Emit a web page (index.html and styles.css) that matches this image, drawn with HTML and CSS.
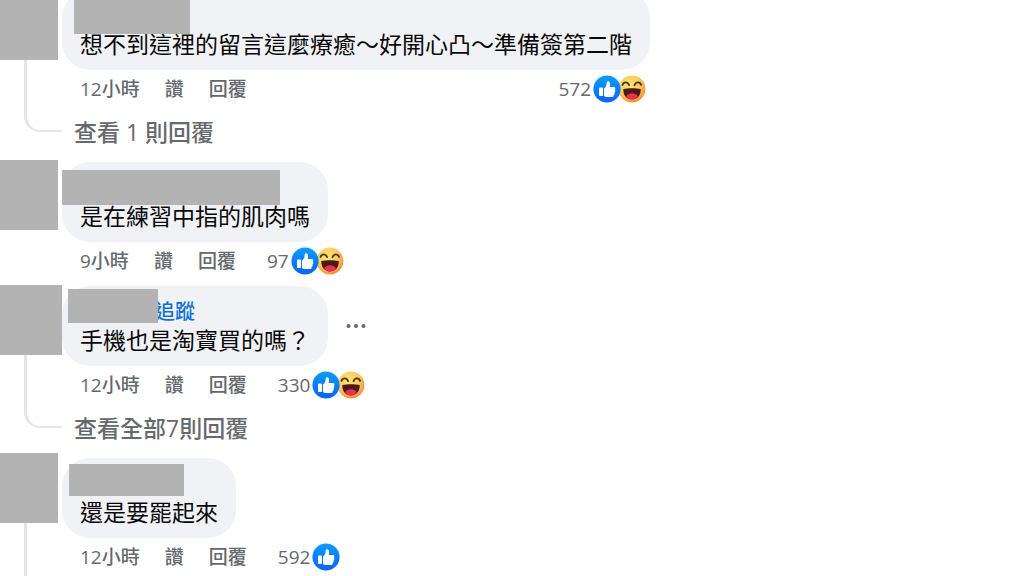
FILE: index.html
```html
<!DOCTYPE html>
<html lang="zh-Hant">

<head>
    <meta charset="UTF-8">
    <meta name="viewport" content="width=device-width, initial-scale=1.0">
    <title>留言</title>
    <link rel="stylesheet" href="styles.css">
</head>

<body>
    <!-- 共用圖示 -->
    <svg class="sprite" aria-hidden="true">
        <defs>
            <linearGradient id="blue" x1="0" y1="0" x2="0" y2="1">
                <stop offset="0" stop-color="#0a9cff" />
                <stop offset="1" stop-color="#0a62f5" />
            </linearGradient>
            <radialGradient id="yellow" cx="0.4" cy="0.35" r="0.68">
                <stop offset="0" stop-color="#ffe478" />
                <stop offset="0.6" stop-color="#fccb5c" />
                <stop offset="1" stop-color="#f38a3c" />
            </radialGradient>
        </defs>
        <symbol id="like" viewBox="0 0 28 28">
            <circle cx="14" cy="14" r="13.6" fill="url(#blue)" />
            <rect x="6" y="12.5" width="4" height="8.5" rx="1" fill="#fff" />
            <path fill="#fff" d="M11 13.6c1.9-1.3 2.6-3 2.6-5.4 0-1.4.5-2 1.4-2 1.6 0 2.2 1.6 2.1 3.2 0 1-.3 1.9-.5 2.6h3.8c1.3 0 2 .7 2 1.7 0 .7-.3 1.1-.7 1.4.4.3.6.7.6 1.2 0 .8-.4 1.3-1 1.5.2.3.3.6.3 1 0 .7-.4 1.2-1.1 1.4.1.2.1.4.1.6 0 .8-.7 1.3-1.8 1.3h-3.6c-1.8 0-3-.4-4.2-1.2z" />
        </symbol>
        <symbol id="haha" viewBox="0 0 28 28">
            <circle cx="14" cy="14" r="13.4" fill="url(#yellow)" />
            <path d="M4.5 10c1.2-3.6 5.400-3.600 6.600.2M16.500 10.200c1.300-3.800 5.400-3.700 6.600-.2" fill="none" stroke="#4a3716" stroke-width="1.8" stroke-linecap="round" />
            <path d="M5.300 14c2.500-.6 5.500-.8 8.700-.8s6.200.2 8.700.8c.4 5.900-3.300 10.400-8.700 10.400s-9.100-4.500-8.700-10.400z" fill="#4b1a16" />
            <path d="M8.100 21.200c1.500-2.200 3.600-3 5.900-3s4.400.8 5.900 3c-1.500 2-3.500 3.100-5.900 3.100s-4.400-1.100-5.900-3.100z" fill="#ee2f52" />
        </symbol>
    </svg>

    <main class="comments">
        <article class="comment has_replies">
            <div class="avatar"></div>
            <div class="comment_con">
                <div class="bubble_row">
                    <div class="bubble">
                        <div class="name"></div>
                        <p>想不到這裡的留言這麼療癒～好開心凸～準備簽第二階</p>
                        <span class="mask mask_a"></span>
                    </div>
                </div>
                <div class="meta">
                    <a href="#">12小時</a>
                    <button type="button">讚</button>
                    <button type="button">回覆</button>
                    <div class="reactions">
                        <span>572</span>
                        <svg class="like"><use href="#like" /></svg>
                        <svg class="haha"><use href="#haha" /></svg>
                    </div>
                </div>
                <button type="button" class="more_replies">查看 1 則回覆</button>
            </div>
        </article>

        <article class="comment">
            <div class="avatar avatar_b"></div>
            <div class="comment_con">
                <div class="bubble_row">
                    <div class="bubble">
                        <div class="name"></div>
                        <p>是在練習中指的肌肉嗎</p>
                        <span class="mask mask_b"></span>
                    </div>
                </div>
                <div class="meta">
                    <a href="#">9小時</a>
                    <button type="button">讚</button>
                    <button type="button">回覆</button>
                    <div class="reactions">
                        <span>97</span>
                        <svg class="like"><use href="#like" /></svg>
                        <svg class="haha"><use href="#haha" /></svg>
                    </div>
                </div>
            </div>
        </article>

        <article class="comment has_replies">
            <div class="avatar avatar_c"></div>
            <div class="comment_con">
                <div class="bubble_row">
                    <div class="bubble">
                        <div class="name"><a href="#" class="follow">追蹤</a></div>
                        <p>手機也是淘寶買的嗎？</p>
                        <span class="mask mask_c"></span>
                    </div>
                    <button type="button" class="menu" aria-label="更多">
                        <svg viewBox="0 0 20 6">
                            <circle cx="2.5" cy="3" r="2" />
                            <circle cx="10" cy="3" r="2" />
                            <circle cx="17.5" cy="3" r="2" />
                        </svg>
                    </button>
                </div>
                <div class="meta">
                    <a href="#">12小時</a>
                    <button type="button">讚</button>
                    <button type="button">回覆</button>
                    <div class="reactions">
                        <span>330</span>
                        <svg class="like"><use href="#like" /></svg>
                        <svg class="haha"><use href="#haha" /></svg>
                    </div>
                </div>
                <button type="button" class="more_replies">查看全部7則回覆</button>
            </div>
        </article>

        <article class="comment thread_open">
            <div class="avatar avatar_d"></div>
            <div class="comment_con">
                <div class="bubble_row">
                    <div class="bubble">
                        <div class="name"></div>
                        <p>還是要罷起來</p>
                        <span class="mask mask_d"></span>
                    </div>
                </div>
                <div class="meta">
                    <a href="#">12小時</a>
                    <button type="button">讚</button>
                    <button type="button">回覆</button>
                    <div class="reactions">
                        <span>592</span>
                        <svg class="like"><use href="#like" /></svg>
                    </div>
                </div>
            </div>
        </article>
    </main>
</body>

</html>
```

FILE: styles.css
```css
*,
*::before {
    padding: 0;
    margin: 0;
    box-sizing: border-box;
}

body {
    background: #fff;
    color: #080809;
    font-family: "Open Sans", "Noto Sans CJK TC", sans-serif;
    font-size: 23px;
    line-height: 30px;
    overflow: hidden;
}

button {
    border: none;
    background: none;
    font: inherit;
    color: inherit;
    cursor: pointer;
}

a {
    color: inherit;
    text-decoration: none;
}

.sprite {
    position: absolute;
    width: 0;
    height: 0;
}

/* 第一則留言上緣捲出畫面 */
.comments {
    display: flex;
    flex-direction: column;
    gap: 6px;
    margin-top: -10px;
}

.comment {
    position: relative;
    display: flex;
    align-items: flex-start;
    padding-left: 62px;
}

/* 回覆連接線 */
.has_replies::before,
.thread_open::before {
    content: "";
    position: absolute;
    left: 24px;
    top: 40px;
    bottom: 24px;
    width: 38px;
    border-left: 3px solid #e3e3ec;
}

.has_replies::before {
    border-bottom: 2px solid #e6e6ea;
    border-bottom-left-radius: 16px;
}

.thread_open::before {
    bottom: 0;
}

/* 遮住頭像與姓名的灰塊 */
.avatar,
.mask {
    position: absolute;
    background: #b3b3b3;
}

.avatar {
    left: 0;
    top: 0;
    width: 58px;
    height: 70px;
}

.avatar_b {
    top: -2px;
}

.avatar_c {
    top: -1px;
    width: 62px;
}

.avatar_d {
    top: -5px;
}

.mask_a {
    left: 12px;
    top: 8px;
    width: 116px;
    height: 36px;
}

.mask_b {
    left: 0;
    top: 8px;
    width: 218px;
    height: 35px;
}

.mask_c {
    left: 6px;
    top: 3px;
    width: 90px;
    height: 34px;
}

.mask_d {
    left: 7px;
    top: 6px;
    width: 115px;
    height: 32px;
}

.bubble_row {
    display: flex;
    align-items: center;
    gap: 18px;
}

.bubble {
    position: relative;
    padding: 11px 18px;
    border-radius: 28px;
    background: #f0f2f5;
}

.name {
    height: 28px;
    padding-left: 75px;
    font-size: 20px;
}

.follow {
    color: #0f6fd6;
    font-weight: 500;
}

.menu svg {
    display: block;
    width: 20px;
    height: 6px;
    fill: #65686c;
}

.meta {
    display: flex;
    align-items: center;
    gap: 25px;
    height: 38px;
    padding: 0 4px 0 18px;
    font-size: 19px;
    color: #65686c;
}

.meta a,
.meta button {
    font-weight: 500;
}

.reactions {
    display: flex;
    align-items: center;
    margin-left: auto;
    padding-left: 6px;
}

.reactions svg {
    width: 28px;
    height: 28px;
}

.reactions .like {
    position: relative;
    z-index: 1;
    margin-left: 2px;
}

.reactions .haha {
    margin-left: -3px;
}

.more_replies {
    display: block;
    height: 48px;
    padding-left: 12px;
    color: #65686c;
    font-weight: 500;
}
```
